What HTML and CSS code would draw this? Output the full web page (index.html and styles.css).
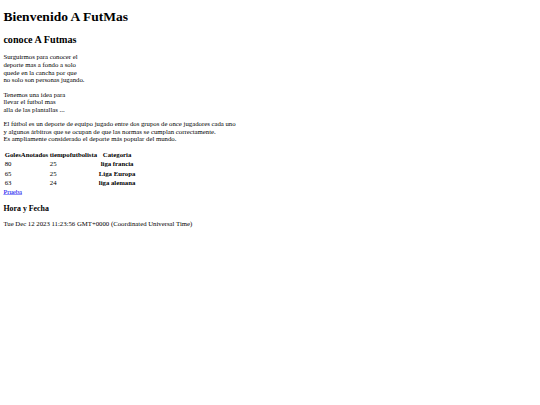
FILE: index.html
```html
<!DOCTYPE html>
<html lang="es" class="page">
<head>
<meta charset="utf-8">
<title>FutMas</title>
<link rel="stylesheet" href="styles.css">
</head>
<body class="page-body">
<div class="sheet">
<h1 class="title">Bienvenido A FutMas</h1>
<h2 class="subtitle">conoce A Futmas</h2>
<p class="text">Surguirmos para conocer el<br>deporte mas a fondo a solo<br>quede en la cancha por que<br>no solo son personas jugando.</p>
<p class="text">Tenemos una idea para<br>llevar el futbol mas<br>alla de las plantallas ...</p>
<p class="text">El fútbol es un deporte de equipo jugado entre dos grupos de once jugadores cada uno<br>y algunos árbitros que se ocupan de que las normas se cumplan correctamente.<br>Es ampliamente considerado el deporte más popular del mundo.</p>
<table class="stats">
<tr><th>GolesAnotados</th><th>tiempofutbolista</th><th>Categoria</th></tr>
<tr><td>80</td><td>25</td><th>liga francia</th></tr>
<tr><td>65</td><td>25</td><th>Liga Europa</th></tr>
<tr><td>63</td><td>24</td><th>liga alemana</th></tr>
</table>
<a class="link" href="#">Prueba</a>
<h3 class="section">Hora y Fecha</h3>
<p class="text">Tue Dec 12 2023 11:23:56 GMT+0000 (Coordinated Universal Time)</p>
</div>
</body>
</html>
```
FILE: styles.css
```css
.page {
  background: #ffffff;
  overflow: hidden;
}
.page-body {
  margin: 0;
  width: 540px;
  height: 405px;
  overflow: hidden;
  font-family: "Liberation Serif", "Times New Roman", serif;
  font-size: 16px;
  color: #000000;
}
.sheet {
  display: flow-root;
  box-sizing: border-box;
  width: 1280px;
  padding: 0 8px 8px;
  transform: scale(0.421875);
  transform-origin: 0 0;
}
.link {
  color: #0000ee;
}
```
